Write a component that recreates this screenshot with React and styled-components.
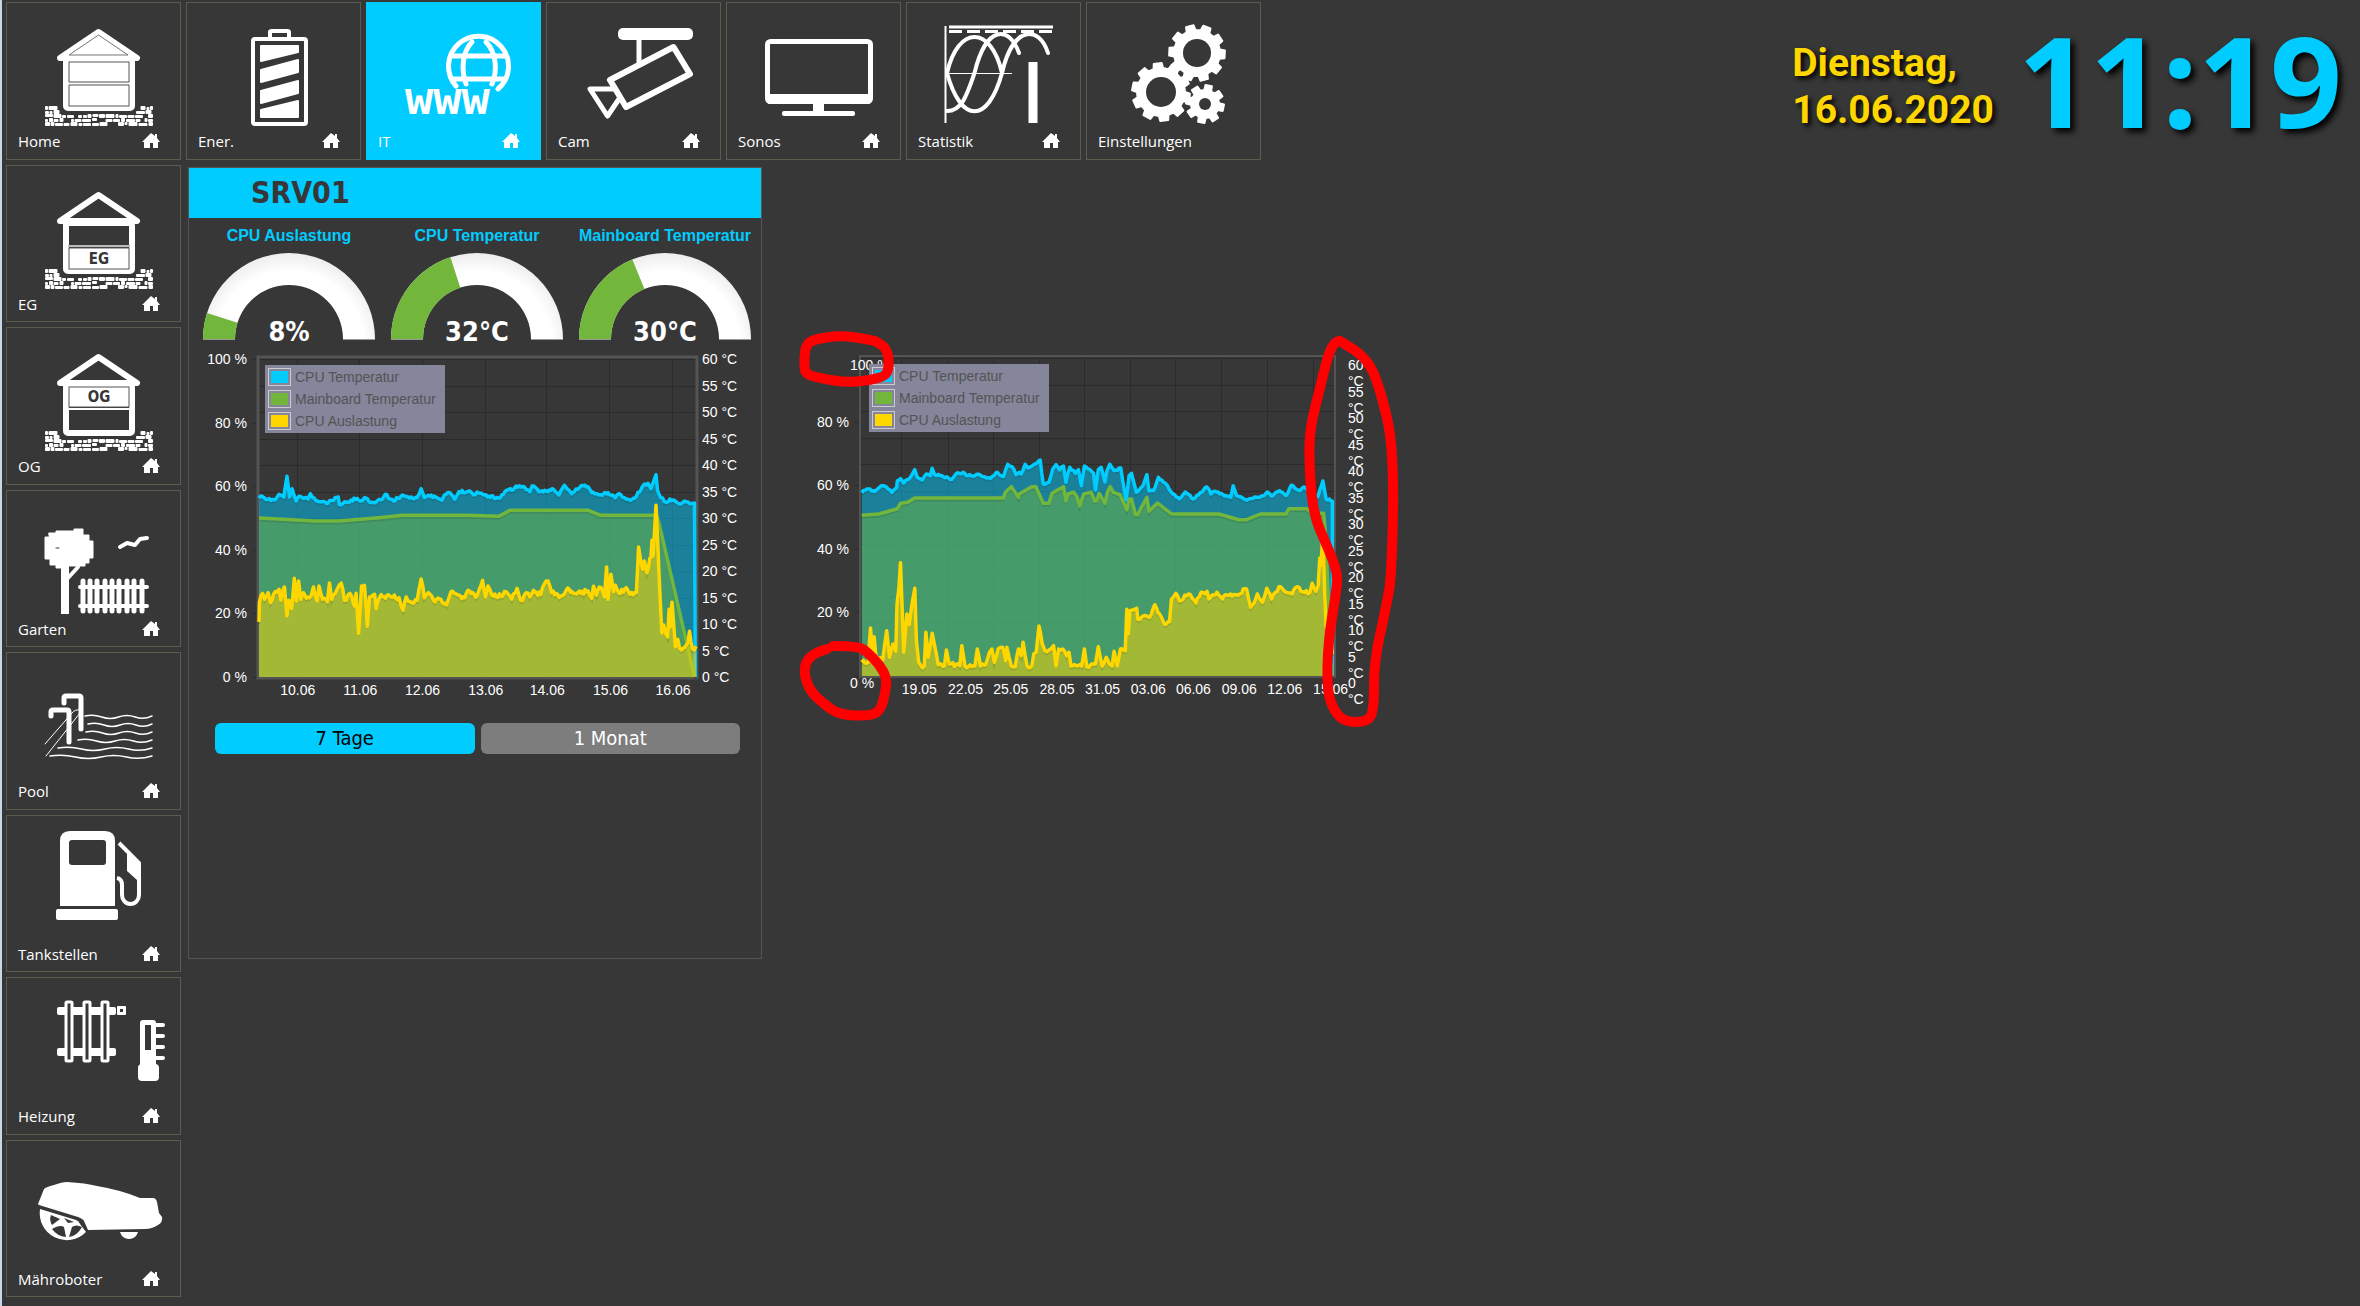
import React, { useState } from "react";
import styled, { createGlobalStyle } from "styled-components";

const CYAN = "#00ccff";
const GREEN = "#72b63c";
const YELLOW = "#ffd700";
const BACK = "#373737";

// small repeatable random generator, keeps the curves stable between renders
const createRandom = (seed) => {
  let s = seed;
  return () => {
    s = (s * 16807) % 2147483647;
    return s / 2147483647;
  };
};

/* ---------- tile icons ---------- */

const stones = (() => {
  const random = createRandom(77);
  const list = [];
  [104, 108, 112, 116, 120].forEach((y, row) => {
    let x = 39;
    while (x < 145) {
      const w = Math.min(3 + Math.floor(random() * 7), 147 - x);
      const hidden = row < 2 && x + w > 56 && x < 129;
      if (!hidden && random() > 0.1) {
        const drop = random() > 0.5 ? 1 : 0;
        list.push({ x, y: y + drop, w, h: random() > 0.3 ? 4 - drop : 3 });
      }
      x += w + (random() > 0.6 ? 1 : 0.5);
    }
  });
  return list;
})();

const House = ({ filled, lower, upper }) => (
  <>
    {stones.map((s, i) => (
      <rect key={i} x={s.x} y={s.y} width={s.w} height={s.h} rx='1' fill='#fff' />
    ))}
    <rect x='60' y='58' width='66' height='48' rx='2' fill={BACK} stroke='#fff' strokeWidth='6' />
    <path
      d='M54 56 L92.500 30 L131 56 Z'
      fill={BACK}
      stroke='#fff'
      strokeWidth='6'
      strokeLinejoin='round'
    />
    {filled && <path d='M63 53 L92.500 33 L122 53 Z' fill='#fff' stroke='#777' strokeWidth='1' />}
    {(filled || upper) && (
      <rect x='63' y='60' width='60' height='20' fill='#fff' stroke='#555' strokeWidth='1' />
    )}
    {(filled || lower) && (
      <rect x='63' y='83' width='60' height='21' fill='#fff' stroke='#555' strokeWidth='1' />
    )}
    {filled && <path d='M62 81.500 H124' stroke='#fff' strokeWidth='2' />}
    {upper && <path d='M62 82 H124' stroke='#fff' strokeWidth='2' />}
    {lower && <path d='M62 81 H124' stroke='#bbb' strokeWidth='2' />}
    {(lower || upper) && (
      <IconText x='93' y={lower ? 99 : 75} textAnchor='middle'>
        {lower || upper}
      </IconText>
    )}
  </>
);

const Battery = () => (
  <g fill='none' stroke='#fff' strokeWidth='4' strokeLinejoin='round'>
    <rect x='67' y='37' width='53' height='85' rx='2' />
    <path d='M84 36 V30 Q84 29 86 29 H101 Q103 29 103 30 V36' />
    <g fill='#fff' strokeWidth='2'>
      <path d='M75 44 H112 V50 L75 59 Z' />
      <path d='M75 68 L112 58 V70 L75 80 Z' />
      <path d='M75 89 L112 79 V91 L75 101 Z' />
      <path d='M75 108 L112 99 V115 H75 Z' />
    </g>
  </g>
);

const Globe = () => (
  <>
    <g fill='none' stroke='#fff' strokeWidth='5' strokeLinecap='round'>
      <path d='M90 84 A30 30 0 1 1 132 87' />
      <path d='M100 82 C95 68 96 50 106 40' />
      <path d='M126 82 C132 68 130 50 120 40' />
      <path d='M87 54 H139 M87 77 H139' />
    </g>
    <IconText x='39' y='112' size='47' light mono>
      www
    </IconText>
  </>
);

const Camera = () => (
  <g fill='none' stroke='#fff' strokeWidth='5' strokeLinejoin='round'>
    <rect x='72' y='26' width='75' height='12' rx='5' fill='#fff' stroke='none' />
    <path d='M93 36 V62' />
    <path d='M127.500 45 L144 72 L80 105 L64 78 Z' strokeWidth='6' />
    <path d='M70 87 H44 L61.500 114 L73 97' strokeWidth='5' />
  </g>
);

const Monitor = () => (
  <>
    <rect x='41.500' y='39.500' width='103' height='60' rx='3' fill='none' stroke='#fff' strokeWidth='5' />
    <rect x='41' y='92' width='104' height='10' rx='3' fill='#fff' />
    <rect x='87' y='100' width='11' height='11' fill='#fff' />
    <rect x='56' y='109' width='73' height='5' rx='2' fill='#fff' />
  </>
);

const Waves = () => (
  <g fill='none' stroke='#fff'>
    <path d='M39.500 24 V121' strokeWidth='2' />
    <path d='M43 25 H147' strokeWidth='3' />
    <path d='M43 29.500 H147' strokeWidth='3' strokeDasharray='13 5' />
    <path d='M41 71.500 H106' strokeWidth='1' />
    <g strokeWidth='4' strokeLinecap='round'>
      <path d='M41 71 C52 23 85 23 96 71' />
      <path d='M41 109 C55 109 60 96 68.500 71 C80 23 103 23 113 51' />
      <path d='M41 71 C55 122 82 122 96 71 C107 23 133 23 142 51' />
    </g>
    <path d='M127 60 V121' strokeWidth='9' />
  </g>
);

const gearPath = (cx, cy, tip, body, teeth, turn) => {
  const points = [];
  for (let i = 0; i < teeth; i++) {
    const step = (Math.PI * 2) / teeth;
    const a = i * step + turn;
    [
      [body, -0.32],
      [tip, -0.22],
      [tip, 0.22],
      [body, 0.32],
    ].forEach(([r, o]) => {
      points.push(`${cx + r * Math.cos(a + o * step)} ${cy + r * Math.sin(a + o * step)}`);
    });
  }
  return `M${points.join(" L")} Z`;
};

const Gears = () => (
  <g fill='#fff' stroke='#fff' strokeWidth='2' strokeLinejoin='round'>
    <path d={gearPath(111, 51, 28, 23, 10, 0.05)} />
    <path d={gearPath(75, 90, 29, 24, 10, 0.2)} />
    <path d={gearPath(119, 102, 19, 14, 8, 0.2)} />
    <g fill={BACK} stroke='none'>
      <circle cx='111' cy='51' r='14' />
      <circle cx='75' cy='90' r='15' />
      <circle cx='119' cy='102' r='6' />
    </g>
  </g>
);

const Garden = () => (
  <g fill='none' stroke='#fff' strokeLinecap='round'>
    <path
      d='M43 43 H50 V41 H68 V39 H77 V45 H83 V51 H87 V68 H83 V73 H79 V76 H56 V78 H50 V75 H44 V69 H39 V47 H43 Z'
      fill='#fff'
      strokeWidth='1'
    />
    <path d='M50 58 H53' stroke={BACK} strokeWidth='1' />
    <path d='M59 76 V124' strokeWidth='8' strokeLinecap='butt' />
    <path d='M72 77 L62 88' strokeWidth='4' />
    <path d='M114 57 L121 53 L129 55 L134 49 L141 48' strokeWidth='4' strokeLinejoin='round' />
    {[77, 84, 91, 99, 106, 113, 121, 128, 136].map((x) => (
      <path key={x} d={`M${x} 91 V121`} strokeWidth='5' />
    ))}
    <path d='M74 97 H141 M74 116 H141' strokeWidth='4' />
  </g>
);

const Pool = () => (
  <g fill='none' stroke='#fff' strokeLinecap='round' strokeLinejoin='round'>
    <path d='M58 51 V46 Q58 44 60 44 H73 Q75 44 75 46 V77' strokeWidth='5' />
    <path d='M45 64 V60 Q45 58 47 58 H61 Q63 58 63 60 V90' strokeWidth='5' />
    <path d='M39 92 L66 61 Q69 57 74 58 M40 104 L74 61' strokeWidth='1' />
    {[
      [79, 65],
      [82, 73],
      [80, 81],
      [72, 89],
      [52, 97],
      [44, 105],
    ].map(([x, y]) => {
      const step = (146 - x) / 4;
      return (
        <path
          key={y}
          d={`M${x} ${y - 1} q${step / 2} -2 ${step} 1 t${step} 0 t${step} 0 t${step} -1`}
          strokeWidth='1.500'
        />
      );
    })}
  </g>
);

const FuelPump = () => (
  <>
    <path d='M54 91 V26 Q54 16 64 16 H99 Q109 16 109 26 V91 Z' fill='#fff' />
    <rect x='63' y='25' width='37' height='25' rx='3' fill={BACK} />
    <rect x='50' y='94' width='62' height='11' rx='2' fill='#fff' />
    <path
      d='M113 28 L133 48 V80 A8.500 9 0 0 1 116 80 V70 Q116 64 111 63'
      fill='none'
      stroke='#fff'
      strokeWidth='4'
    />
    <path d='M121 35 L134 47 V67 L131 65 L121 56 Z' fill='#fff' />
  </>
);

const Radiator = () => (
  <>
    <rect x='51' y='30' width='59' height='8' rx='2' fill='#fff' />
    <rect x='51' y='71' width='59' height='8' rx='2' fill='#fff' />
    {[63, 81, 99].map((x) => (
      <rect
        key={x}
        x={x - 3}
        y='25'
        width='6'
        height='59'
        rx='1'
        fill={BACK}
        stroke='#fff'
        strokeWidth='3'
      />
    ))}
    <rect x='111' y='29' width='9' height='9' rx='1' fill='#fff' />
    <rect x='114' y='32' width='3' height='3' fill={BACK} />
    <rect x='134' y='43' width='16' height='50' rx='3' fill='#fff' />
    <rect x='132' y='87' width='21' height='17' rx='4' fill='#fff' />
    <rect x='139' y='48' width='6' height='25' fill={BACK} />
    <path
      d='M149 48 H157 M149 59 H157 M149 70 H157 M149 81 H157'
      stroke='#fff'
      strokeWidth='4'
      strokeLinecap='round'
    />
  </>
);

const Mower = () => (
  <>
    <path
      d='M32 64 L38 49 Q40 47 48 45 Q56 42 61 42 Q80 43 91 46 Q115 50 134 58 H147 Q150 58 151 62 L153 73 L156 77 Q157 82 152 85 Q146 89 139 89 L82 90 L78 81 Q77 79 72 77 L33 65 Z'
      fill='#fff'
    />
    <path
      d='M34 69 L70 80 Q73 81 74 84 L80 92 A27 27 0 0 1 34 69 Z'
      fill='#fff'
    />
    <path d='M45 75 L54 79 L46 85 Q43 80 45 75 Z' fill={BACK} />
    <path d='M46 89 Q54 84 58 87 L60 97 Q51 96 46 89 Z' fill={BACK} />
    <path d='M63 97 L66 87 Q70 84 76 87 Q71 96 63 97 Z' fill={BACK} />
    <path d='M58 78 L68 82 L62 83 Z' fill={BACK} />
    <path d='M114 92 H132 Q130 99 123 99 Q116 99 114 92 Z' fill='#fff' />
  </>
);

const HomeMark = () => (
  <svg width='18' height='16' viewBox='0 0 18 16' aria-hidden='true'>
    <path d='M9 0 L13 3 V1 H15 V5 L18 9 H16 V15 H11 V10 H8 V15 H2 V9 H0 Z' fill='#fff' />
  </svg>
);

const topTiles = [
  { label: "Ener.", icon: <Battery />, mark: true },
  { label: "IT", icon: <Globe />, mark: true, active: true },
  { label: "Cam", icon: <Camera />, mark: true },
  { label: "Sonos", icon: <Monitor />, mark: true },
  { label: "Statistik", icon: <Waves />, mark: true },
  { label: "Einstellungen", icon: <Gears /> },
];

const sideTiles = [
  { label: "Home", icon: <House filled />, mark: true },
  { label: "EG", icon: <House lower='EG' />, mark: true },
  { label: "OG", icon: <House upper='OG' />, mark: true },
  { label: "Garten", icon: <Garden />, mark: true },
  { label: "Pool", icon: <Pool />, mark: true },
  { label: "Tankstellen", icon: <FuelPump />, mark: true },
  { label: "Heizung", icon: <Radiator />, mark: true },
  { label: "Mähroboter", icon: <Mower />, mark: true },
];

const Tile = ({ label, icon, mark, active }) => (
  <TileLink href='#' $active={active}>
    <svg width='173' height='124' viewBox='1 1 173 124' aria-hidden='true'>
      {icon}
    </svg>
    <TileFooter>
      <span>{label}</span>
      {mark && <HomeMark />}
    </TileFooter>
  </TileLink>
);

/* ---------- gauges ---------- */

const ringPart = (from, to) => {
  const at = (r, part) => {
    const angle = Math.PI * (1 - part);
    return `${94 + r * Math.cos(angle)} ${93 - r * Math.sin(angle)}`;
  };
  return `M${at(86, from)} A86 86 0 0 1 ${at(86, to)} L${at(54, to)} A54 54 0 0 0 ${at(54, from)} Z`;
};

const Gauge = ({ title, value, part }) => (
  <GaugeBox>
    <GaugeTitle>{title}</GaugeTitle>
    <svg width='188' height='104' role='img' aria-label={`${title} ${value}`}>
      <defs>
        <radialGradient id='ring' gradientUnits='userSpaceOnUse' cx='94' cy='100' r='94'>
          <stop offset='0.800' stopColor='#fff' />
          <stop offset='1' stopColor='#ececec' />
        </radialGradient>
      </defs>
      <path d={ringPart(0, 1)} fill='url(#ring)' />
      <path d={ringPart(0, part)} fill={GREEN} />
      <path d='M8 93.500 H40 M148 93.500 H180' stroke='#999' />
      <GaugeValue x='94' y='95' textAnchor='middle'>
        {value}
      </GaugeValue>
    </svg>
  </GaugeBox>
);

/* ---------- charts ---------- */

const week = {
  domain: { x0: 190, x1: 1392, y0: 1008, y1: 54 },
  plot: { x: 70, y: 9, w: 437, h: 318 },
  grid: [294, 466, 637, 811, 980, 1154, 1326],
  dates: ["10.06", "11.06", "12.06", "13.06", "14.06", "15.06", "16.06"],
  cpuTemp:
    "190,472 199,466 210,476 235,476 245,460 258,468 267,406 274,468 281,443 292,480 300,466 325,474 331,458 338,470 350,480 380,486 408,468 411,490 430,484 460,472 470,480 480,470 500,484 530,474 537,460 560,480 585,462 600,468 625,470 636,443 645,470 660,465 680,470 693,478 700,462 715,455 728,475 740,452 770,450 780,462 790,453 810,462 850,472 870,448 890,445 897,435 920,438 935,452 941,435 960,452 1000,445 1015,462 1030,433 1050,458 1078,433 1095,437 1105,455 1125,462 1150,455 1170,470 1180,458 1195,470 1212,478 1228,466 1245,436 1260,427 1268,443 1275,422 1282,401 1286,448 1295,470 1310,484 1320,474 1345,488 1360,480 1375,488 1388,486 1390,1008",
  boardTemp:
    "190,531 345,540 410,540 520,530 585,523 760,523 850,526 880,508 1096,508 1130,523 1284,523 1290,545 1388,1008",
  cpuLoad:
    "190,843 191,785 200,757 205,775 215,755 222,785 230,760 245,745 250,778 260,738 267,825 272,778 280,803 287,712 293,780 299,720 305,775 312,755 320,772 333,765 340,738 350,780 355,735 365,775 378,782 384,726 390,775 405,745 416,726 425,778 440,757 452,795 457,757 464,877 472,735 480,733 488,856 494,768 508,760 512,803 522,768 550,765 575,770 586,808 595,768 610,785 625,778 636,714 645,770 656,755 670,778 690,775 706,792 718,752 740,762 756,770 765,748 790,765 805,718 813,768 820,735 830,762 860,765 870,752 885,775 900,742 910,778 925,755 935,768 945,748 965,760 980,720 985,720 995,755 1020,765 1035,748 1075,757 1095,750 1105,772 1110,736 1118,762 1126,738 1140,768 1146,678 1150,775 1158,700 1165,752 1170,733 1180,757 1200,740 1210,760 1228,755 1234,618 1245,685 1250,660 1257,695 1265,652 1268,650 1271,598 1274,645 1282,493 1285,560 1290,690 1298,876 1303,852 1314,888 1318,805 1321,858 1326,784 1335,918 1342,895 1347,922 1365,913 1370,905 1374,871 1382,924 1392,916",
};

const month = {
  domain: { x0: 180, x1: 1376, y0: 1066, y1: 112 },
  plot: { x: 71, y: 37, w: 473, h: 318 },
  grid: [282, 399, 513, 630, 745, 861, 975, 1091, 1206, 1322],
  dates: ["19.05", "22.05", "25.05", "28.05", "31.05", "03.06", "06.06", "09.06", "12.06", "15.06"],
  cpuTemp:
    "182,516 195,505 215,512 232,495 245,500 258,515 270,500 272,480 280,474 288,487 305,470 316,447 322,470 335,478 345,460 355,465 360,443 366,462 380,465 410,476 420,460 438,455 450,465 480,462 508,473 525,455 540,468 551,431 562,438 572,462 580,455 585,460 595,431 602,442 620,430 633,418 641,490 655,485 665,445 673,432 682,448 692,436 698,485 708,440 722,458 730,447 737,495 745,436 768,458 773,508 780,447 787,440 797,484 802,450 809,431 820,450 837,442 850,538 858,465 864,458 876,515 893,495 903,462 908,510 920,510 932,470 945,485 955,495 965,515 985,535 1000,514 1020,535 1055,499 1065,520 1075,512 1115,530 1121,495 1130,525 1155,538 1180,530 1200,524 1207,514 1218,526 1238,510 1255,525 1268,494 1290,510 1300,499 1320,520 1335,528 1348,481 1356,535 1372,541 1372,1066",
  boardTemp:
    "182,584 225,580 272,564 280,548 298,545 316,532 540,532 545,515 560,498 578,530 580,520 612,498 622,498 641,548 655,548 663,518 692,498 698,541 703,520 718,515 726,528 733,556 743,520 762,515 771,541 776,541 782,518 797,548 803,515 810,498 818,515 835,522 852,568 858,535 864,535 874,582 880,582 888,562 903,530 908,572 930,547 965,580 1085,580 1135,597 1155,597 1190,580 1255,580 1262,564 1308,564 1320,578 1350,578 1355,650 1370,1066",
  cpuLoad:
    "182,1025 198,1025 204,922 210,1010 213,948 218,1010 235,1018 245,930 252,1010 261,970 268,992 271,850 276,800 280,726 288,995 296,880 302,912 309,850 316,803 320,960 326,1025 332,1036 340,1036 344,935 350,1010 360,938 366,975 375,1032 391,1036 396,988 403,1030 430,1035 435,975 443,1036 468,1036 474,985 482,1036 495,1032 505,995 511,985 517,1025 527,985 538,980 546,1020 549,980 560,1036 570,1038 578,985 585,1005 590,965 600,1036 612,1036 617,1000 623,995 630,916 638,968 645,990 660,985 667,975 673,1036 680,985 690,985 700,1005 706,995 711,1036 738,1036 745,985 751,1038 773,1030 780,978 790,1036 800,1010 808,1030 815,1036 820,992 828,1036 836,985 848,990 852,866 856,940 860,870 877,863 880,895 895,885 910,890 923,852 935,880 948,911 960,903 965,835 976,818 985,840 1008,820 1027,847 1040,815 1055,812 1060,835 1080,815 1090,830 1130,822 1155,805 1165,860 1175,845 1182,820 1195,845 1206,803 1218,835 1228,815 1241,798 1255,815 1270,820 1284,798 1292,812 1315,815 1321,788 1330,812 1336,795 1340,712 1343,735 1348,640 1352,800 1356,920 1364,920 1372,1000",
};

// reads "x,y x,y", fills long steps with measured-looking noise, scales to the plot
const tracePoints = (text, { domain, plot }, noise, seed) => {
  const random = createRandom(seed);
  const raw = text.split(" ").map((pair) => pair.split(",").map(Number));
  const full = [];
  raw.forEach(([x, y], i) => {
    const next = raw[i + 1];
    full.push([x, y]);
    if (!next || !noise) return;
    const count = Math.floor((next[0] - x) / 4);
    for (let n = 1; n < count; n++) {
      const t = n / count;
      full.push([x + (next[0] - x) * t, y + (next[1] - y) * t + (random() - 0.5) * noise]);
    }
  });
  return full.map(([x, y]) => [
    plot.x + ((x - domain.x0) / (domain.x1 - domain.x0)) * plot.w,
    plot.y + ((y - domain.y1) / (domain.y0 - domain.y1)) * plot.h,
  ]);
};

const Trace = ({ points, color, bottom }) => {
  const line = points.map(([x, y]) => `${x.toFixed(1)} ${y.toFixed(1)}`).join(" L");
  const first = points[0][0];
  const last = points[points.length - 1][0];
  return (
    <>
      <path d={`M${first} ${bottom} L${line} L${last} ${bottom} Z`} fill={color} opacity='0.5' />
      <path
        d={`M${line}`}
        transform='translate(0 2)'
        fill='none'
        stroke='#000'
        strokeWidth='3'
        opacity='0.1'
      />
      <path d={`M${line}`} fill='none' stroke={color} strokeWidth='3.500' strokeLinejoin='round' />
    </>
  );
};

const legendRows = [
  ["CPU Temperatur", CYAN],
  ["Mainboard Temperatur", GREEN],
  ["CPU Auslastung", YELLOW],
];

const Legend = ({ x, y }) => (
  <g>
    <rect x={x} y={y} width='180' height='68' fill='#85859b' />
    {legendRows.map(([label, color], i) => (
      <g key={label}>
        <rect x={x + 3.5} y={y + 3.5 + i * 22} width='22' height='17' fill='none' stroke='#ccc' />
        <rect x={x + 6} y={y + 6 + i * 22} width='17' height='12' fill={color} />
        <LegendText x={x + 30} y={y + 17 + i * 22}>
          {label}
        </LegendText>
      </g>
    ))}
  </g>
);

const temperatures = [60, 55, 50, 45, 40, 35, 30, 25, 20, 15, 10, 5, 0];
const percents = [100, 80, 60, 40, 20, 0];

const Chart = ({ data, width, height, noise, wrapped, children }) => {
  const { plot, domain } = data;
  const bottom = plot.y + plot.h;
  const right = plot.x + plot.w;
  const toX = (x) => plot.x + ((x - domain.x0) / (domain.x1 - domain.x0)) * plot.w;
  const lines = temperatures.map((t) => plot.y + ((60 - t) / 60) * plot.h);

  return (
    <ChartSvg width={width} height={height} role='img' aria-label='Verlauf SRV01'>
      <g stroke='#2b2b2b'>
        {data.grid.map((x) => (
          <path key={x} d={`M${Math.round(toX(x)) + 0.5} ${plot.y} V${bottom}`} />
        ))}
        {lines.map((y) => (
          <path key={y} d={`M${plot.x} ${Math.round(y) + 0.5} H${right}`} />
        ))}
        {percents.map((p) => (
          <path key={p} d={`M${plot.x - 6} ${Math.round(bottom - p * 3.18) + 0.5} h5`} />
        ))}
      </g>
      <rect
        x={plot.x - 1}
        y={plot.y - 2}
        width={plot.w + 2}
        height={plot.h + 3}
        fill='none'
        stroke='#545454'
        strokeWidth={wrapped ? 2 : 3}
      />
      <Trace
        points={tracePoints(data.cpuTemp, data, noise, 11)}
        color={CYAN}
        bottom={bottom}
      />
      <Trace points={tracePoints(data.boardTemp, data, 0, 1)} color={GREEN} bottom={bottom} />
      <Trace
        points={tracePoints(data.cpuLoad, data, noise * 2, 5)}
        color={YELLOW}
        bottom={bottom}
      />
      {percents.map((p) => {
        const y = bottom - p * 3.18;
        const moved = wrapped && (p === 100 || p === 0);
        return moved ? (
          <AxisText key={p} x={plot.x - 11} y={y + 12}>
            {p} %
          </AxisText>
        ) : (
          <AxisText key={p} x={plot.x - 12} y={y + 5} textAnchor='end'>
            {p} %
          </AxisText>
        );
      })}
      {temperatures.map((t, i) =>
        wrapped ? (
          <AxisText key={t} x={right + 14} y={lines[i] + 12}>
            {t}
            <tspan x={right + 14} dy='16'>
              °C
            </tspan>
          </AxisText>
        ) : (
          <AxisText key={t} x={right + 6} y={lines[i] + 5}>
            {t} °C
          </AxisText>
        ),
      )}
      {data.grid.map((x, i) => (
        <AxisText key={x} x={toX(x) + (wrapped ? 18 : 1)} y={bottom + 18} textAnchor='middle'>
          {data.dates[i]}
        </AxisText>
      ))}
      <Legend x={plot.x + (wrapped ? 8 : 6)} y={plot.y + 6} />
      {children}
    </ChartSvg>
  );
};

// red marker strokes over the broken axis labels
const markers = [
  [
    [85, 20], [59, 14], [30, 17], [16, 22], [14, 40], [15, 53], [29, 57], [59, 62], [92, 57],
    [99, 50], [98, 28], [85, 20],
  ],
  [
    [43, 325], [69, 325], [78, 332], [89, 343], [97, 357], [95, 373], [91, 388], [82, 395],
    [50, 394], [35, 384], [20, 370], [14, 353], [16, 340], [25, 332], [37, 328],
  ],
  [
    [550, 20], [545, 20], [538, 34], [530, 67], [520, 107], [519, 140], [523, 193], [538, 227],
    [547, 250], [547, 267], [538, 320], [537, 370], [544, 390], [555, 401], [577, 401],
    [584, 390], [584, 340], [596, 287], [602, 253], [604, 127], [590, 67], [577, 37], [550, 20],
  ],
];

const smoothPath = (points) => {
  let d = `M${points[0].join(" ")}`;
  for (let i = 1; i < points.length - 1; i++) {
    const [x, y] = points[i];
    const [nx, ny] = points[i + 1];
    d += ` Q${x} ${y} ${(x + nx) / 2} ${(y + ny) / 2}`;
  }
  return `${d} L${points[points.length - 1].join(" ")}`;
};

const ranges = ["7 Tage", "1 Monat"];

const App = () => {
  const [range, setRange] = useState("7 Tage");

  return (
    <>
      <GlobalStyle />
      <Page>
        <Sidebar>
          {sideTiles.map((tile) => (
            <Tile key={tile.label} {...tile} />
          ))}
        </Sidebar>
        <TopBar>
          <TopNav>
            {topTiles.map((tile) => (
              <Tile key={tile.label} {...tile} />
            ))}
          </TopNav>
          <DateText>
            Dienstag,
            <br />
            16.06.2020
          </DateText>
          <Clock>11:19</Clock>
        </TopBar>
        <Content>
          <Panel>
            <PanelTitle>SRV01</PanelTitle>
            <GaugeRow>
              <Gauge title='CPU Auslastung' value='8%' part={0.098} />
              <Gauge title='CPU Temperatur' value='32°C' part={0.4} />
              <Gauge title='Mainboard Temperatur' value='30°C' part={0.376} />
            </GaugeRow>
            <Chart data={week} width={572} height={356} noise={8} />
            <RangeRow>
              {ranges.map((name) => (
                <RangeButton
                  key={name}
                  type='button'
                  $active={name === range}
                  onClick={() => setRange(name)}
                >
                  {name}
                </RangeButton>
              ))}
            </RangeRow>
          </Panel>
          <SideChart>
            <Chart data={month} width={620} height={420} noise={6} wrapped>
              {markers.map((points, i) => (
                <path
                  key={i}
                  d={smoothPath(points)}
                  fill='none'
                  stroke='#ff0000'
                  strokeWidth='10'
                  strokeLinecap='round'
                  strokeLinejoin='round'
                />
              ))}
            </Chart>
          </SideChart>
        </Content>
      </Page>
    </>
  );
};

export default App;

const GlobalStyle = createGlobalStyle`
  * {
    box-sizing: border-box;
  }
  body {
    margin: 0;
    background-color: ${BACK};
    color: white;
    font-family: "Open Sans", "Noto Sans", sans-serif;
  }
`;

const Page = styled.div`
  display: grid;
  grid-template-columns: 175px 1fr;
  grid-template-rows: repeat(8, 1fr);
  gap: 5px;
  min-height: 100vh;
  padding: 2px 0 9px 4px;
  border-left: 2px solid #c8d6e8;
`;

const Sidebar = styled.nav`
  grid-row: 1 / -1;
  display: grid;
  grid-template-rows: repeat(8, 1fr);
  gap: 5px;
`;

const TopBar = styled.header`
  grid-column: 2;
  display: flex;
`;

const TopNav = styled.nav`
  display: flex;
  gap: 5px;
  margin-right: auto;
`;

const Content = styled.main`
  grid-column: 2;
  grid-row: 2 / -1;
  display: flex;
  align-items: flex-start;
  gap: 28px;
  padding: 2px 0 0 2px;
`;

const TileLink = styled.a`
  display: flex;
  flex-direction: column;
  width: 175px;
  border: 1px solid ${(props) => (props.$active ? CYAN : "#5b5b4e")};
  background-color: ${(props) => (props.$active ? CYAN : "transparent")};
  color: white;
  text-decoration: none;
`;

const TileFooter = styled.span`
  display: flex;
  align-items: center;
  justify-content: space-between;
  padding: 0 20px 0 11px;
  font-size: 15px;
  line-height: 28px;
`;

const IconText = styled.text`
  font-family: ${(props) => (props.mono ? '"DejaVu Sans Mono"' : '"DejaVu Sans Condensed"')}, sans-serif;
  font-size: ${(props) => props.size || 15}px;
  font-weight: bold;
  fill: ${(props) => (props.light ? "#fff" : BACK)};
`;

const DateText = styled.div`
  padding: 38px 24px 0 0;
  color: ${YELLOW};
  font-family: Roboto, sans-serif;
  font-size: 39px;
  font-weight: bold;
  line-height: 47px;
  text-shadow: 3px 3px 5px black;
`;

const Clock = styled.div`
  padding: 7px 18px 0 0;
  color: ${CYAN};
  font-size: 126px;
  font-weight: bold;
  line-height: 140px;
  text-shadow: 4px 4px 6px black;
`;

const Panel = styled.section`
  width: 574px;
  min-height: 792px;
  border: 1px solid #545454;
`;

const PanelTitle = styled.h1`
  margin: 0;
  padding-left: 62px;
  background-color: ${CYAN};
  color: ${BACK};
  font-family: "DejaVu Sans Condensed", "DejaVu Sans", sans-serif;
  font-size: 30px;
  line-height: 50px;
`;

const GaugeRow = styled.div`
  display: grid;
  grid-template-columns: repeat(3, 1fr);
  padding: 8px 2px 0 6px;
`;

const GaugeBox = styled.div`
  display: flex;
  flex-direction: column;
  align-items: center;
`;

const GaugeTitle = styled.h2`
  margin: 0;
  color: ${CYAN};
  font-family: "Liberation Sans", Arial, sans-serif;
  font-size: 16px;
  line-height: 20px;
  white-space: nowrap;
`;

const GaugeValue = styled.text`
  fill: white;
  font-family: "DejaVu Sans Condensed", "DejaVu Sans", sans-serif;
  font-size: 27px;
  font-weight: bold;
`;

const ChartSvg = styled.svg`
  display: block;
  font-family: "Liberation Sans", Arial, sans-serif;
  font-size: 14px;
`;

const AxisText = styled.text`
  fill: white;
`;

const LegendText = styled.text`
  fill: #545454;
`;

const RangeRow = styled.div`
  display: grid;
  grid-template-columns: 1fr 1fr;
  gap: 6px;
  padding: 17px 21px 0 26px;
`;

const RangeButton = styled.button`
  height: 31px;
  padding: 0;
  border: none;
  border-radius: 6px;
  background-color: ${(props) => (props.$active ? CYAN : "#7d7d7d")};
  color: ${(props) => (props.$active ? "black" : "white")};
  font-family: "DejaVu Sans Condensed", "DejaVu Sans", sans-serif;
  font-size: 20px;
  line-height: 30px;
  cursor: pointer;
`;

const SideChart = styled.section`
  padding-top: 154px;
`;
